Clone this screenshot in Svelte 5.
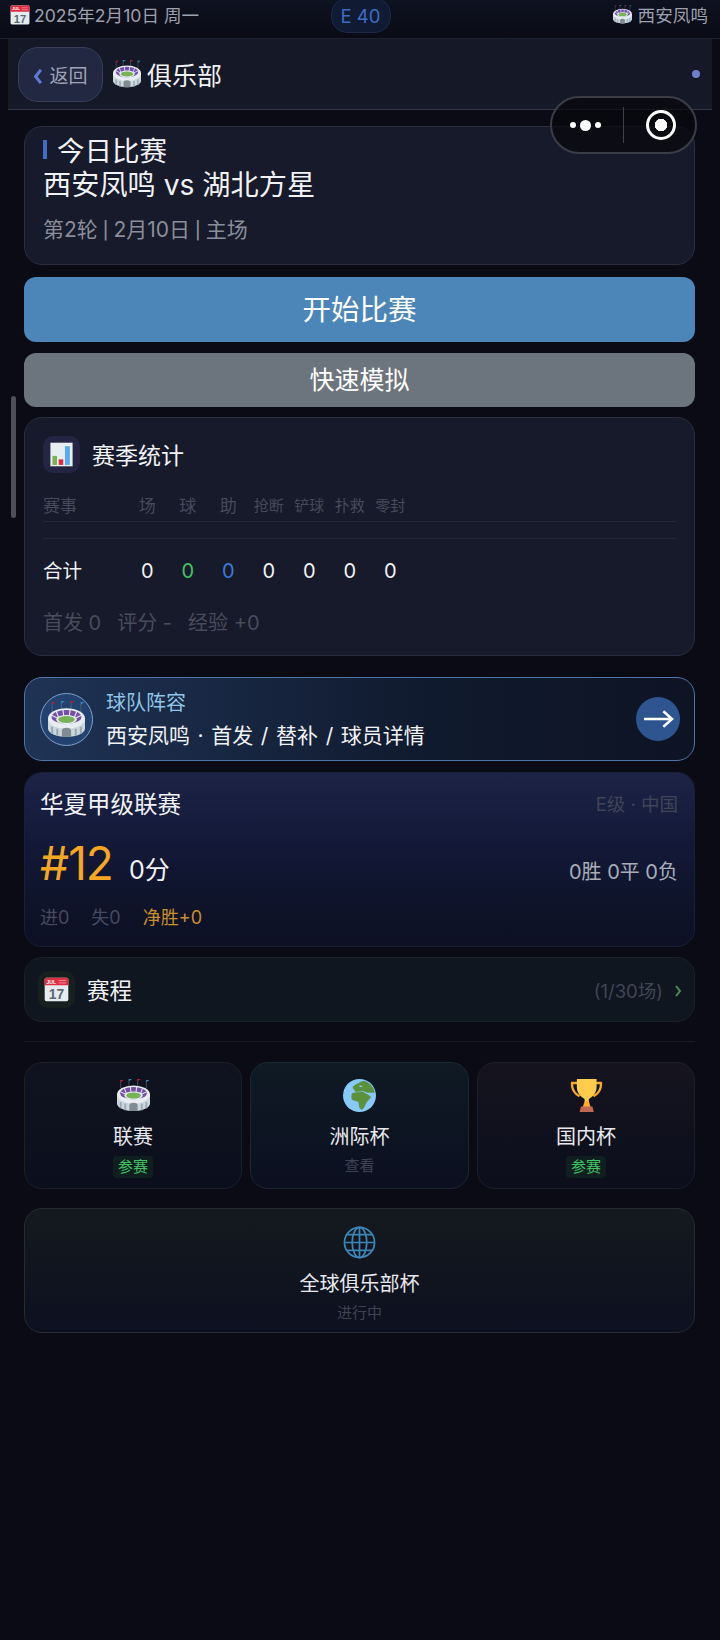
<script>
  const totals = [
    { v: 0 },
    { v: 0, c: 'green' },
    { v: 0, c: 'blue' },
    { v: 0 },
    { v: 0 },
    { v: 0 },
    { v: 0 }
  ];
  const heads = ['场', '球', '助', '抢断', '铲球', '扑救', '零封'];
</script>

{#snippet stadium()}
  <svg class="emoji" viewBox="0 0 36 36">
    <path d="M4 10V1M13 8V0M22.500 8V0M32 10V1" stroke="#66757f" stroke-width=".6" />
    <path d="M4 1h3.500L4 3.500z" fill="#be1931" />
    <path d="M13 0h3.500L13 2.500z" fill="#3b88c3" />
    <path d="M22.500 0H26l-3.500 2.500z" fill="#be1931" />
    <path d="M32 1h3.500L32 3.500z" fill="#3b88c3" />
    <path d="M0 17v10c0 4 8 8 18 8s18-4 18-8V17z" fill="#ccd6dd" />
    <ellipse cx="18" cy="17" rx="18" ry="10" fill="#e8edf1" />
    <ellipse cx="18" cy="15.500" rx="14.500" ry="6.800" fill="#744eaa" />
    <path d="M8 10l3 8M14.500 8.500l1.200 9M21.500 8.500l-1.200 9M28 10l-3 8M4 14l7 3.500M32 14l-7 3.500" stroke="#e8edf1" stroke-width="1.100" />
    <ellipse cx="18" cy="18" rx="10" ry="4.500" fill="#e8edf1" />
    <ellipse cx="18" cy="18" rx="8" ry="3.300" fill="#77b255" />
    <path d="M13.500 35v-6c0-2 1.500-3 4.500-3s4.500 1 4.500 3v6z" fill="#808b94" />
    <path d="M4 25v7M9 27v7M27 27v7M32 25v7" stroke="#99aab5" stroke-width="2" />
  </svg>
{/snippet}

{#snippet calendar()}
  <svg class="emoji" viewBox="0 0 36 36">
    <rect x="1" y="1" width="34" height="34" rx="2.500" fill="#e6ebef" />
    <path d="M1 12V3.500A2.500 2.500 0 0 1 3.500 1h29A2.500 2.500 0 0 1 35 3.500V12z" fill="#dd2e44" />
    <text x="3.500" y="9.500" class="jul">JUL</text>
    <path d="M21 5h11M21 8.500h11" stroke="#f4909f" stroke-width="1.300" />
    <text x="18" y="31.500" class="day">17</text>
  </svg>
{/snippet}

{#snippet chart()}
  <svg class="emoji" viewBox="0 0 36 36">
    <rect x="2" y="1" width="32" height="34" fill="#e8edf0" />
    <rect x="5" y="20" width="6.500" height="13" fill="#77b255" />
    <rect x="14" y="25" width="6.500" height="8" fill="#dd2e44" />
    <rect x="23" y="6" width="7" height="27" fill="#55acee" />
  </svg>
{/snippet}

{#snippet earth()}
  <svg class="emoji" viewBox="0 0 36 36">
    <circle cx="18" cy="18" r="18" fill="#88c9f9" />
    <g fill="#5c913b" stroke="#5c913b" stroke-width="1" stroke-linejoin="round">
      <path d="M9.500 16.500C11 15 13 15.500 15 15c2-1 5-1 7.500-.5 1 1.500 3 2 4 2.500 1 1 3 1.500 3.500 3-1 2-4 4-5.500 7-1 2-2 5-3.500 6-1.500.5-2.500-1-3-3-.5-2.500 0-4-1.500-5.500-2-1-5-1-6.500-2.500-.5-1.500-.5-3.500 0-5z" />
      <path d="M11 8.500c2-1.500 4-3 6-3.500 2-1.500 4-2.500 6-2.500 4 1 7.500 4 9.500 7.500 1 1.500 1.500 3 1.500 4.500-3-.5-6 .5-9-.5-1-1-3-1.500-5-1.500-2.500 0-4.500 1.500-6 1-1.500-1.500-3-3.500-3-5z" />
    </g>
    <path d="M17.500 7.500c1.500-.5 3-.5 4 .5-1 1.200-3 1.200-4-.5z" fill="#88c9f9" />
  </svg>
{/snippet}

{#snippet trophy()}
  <svg class="emoji" viewBox="0 0 36 36">
    <path d="M1 3h9v2.600H3.600c-.4 5 2.600 9.400 7.400 11.900l-1.200 2.300C4 17 .2 11 1 3zM35 3h-9v2.600h6.400c.4 5-2.600 9.400-7.400 11.900l1.200 2.300C32 17 35.800 11 35 3z" fill="#f4a92f" />
    <path d="M7.500 0h21.500v9c0 6-4 10-8.500 13v2.500h-4.500V22C11.500 19 7.500 15 7.500 9z" fill="#ffcc4d" />
    <path d="M16 24h4.500l2 6.500h-8.500z" fill="#ffac33" />
    <path d="M12 30h12.500l1.500 6H10.500z" fill="#c1694f" />
  </svg>
{/snippet}

<div class="page">
  <header class="status">
    <div class="side">
      <span class="status-icon">{@render calendar()}</span>
      <span>2025年2月10日 周一</span>
    </div>
    <div class="level">E 40</div>
    <div class="side">
      <span class="status-icon wide">{@render stadium()}</span>
      <span>西安凤鸣</span>
    </div>
  </header>

  <nav class="nav">
    <button class="back">
      <svg class="chev" viewBox="0 0 10 18"><path d="M8 2L2.500 9 8 16" /></svg>
      <span>返回</span>
    </button>
    <span class="nav-icon">{@render stadium()}</span>
    <span class="nav-title">俱乐部</span>
    <i class="nav-dot"></i>
  </nav>

  <div class="capsule">
    <div class="dots"><i></i><i class="big"></i><i></i></div>
    <div class="sep"></div>
    <div class="target"><i></i></div>
  </div>
  <div class="scrollbar"></div>

  <main class="content">
    <section class="card today">
      <div class="today-title">今日比赛</div>
      <div class="today-match">西安凤鸣 vs 湖北方星</div>
      <div class="today-sub">第2轮<span class="pipe">|</span>2月10日<span class="pipe">|</span>主场</div>
    </section>

    <button class="btn start">开始比赛</button>
    <button class="btn quick">快速模拟</button>

    <section class="card stats">
      <div class="stats-head">
        <span class="icon-box">{@render chart()}</span>
        <span class="stats-title">赛季统计</span>
      </div>
      <div class="row head-row">
        <span class="first">赛事</span>
        {#each heads as h}
          <span class="col">{h}</span>
        {/each}
      </div>
      <div class="spacer-row"></div>
      <div class="row total-row">
        <span class="first">合计</span>
        {#each totals as t}
          <span class="col {t.c ?? ''}">{t.v}</span>
        {/each}
      </div>
      <div class="stats-foot">
        <span>首发 0</span>
        <span>评分 -</span>
        <span>经验 +0</span>
      </div>
    </section>

    <section class="team">
      <div class="avatar">{@render stadium()}</div>
      <div class="team-text">
        <div class="team-label">球队阵容</div>
        <div class="team-line">西安凤鸣 · 首发 / 替补 / 球员详情</div>
      </div>
      <div class="go">
        <svg viewBox="0 0 32 20"><path d="M1 10h29M21 2l9 8-9 8" /></svg>
      </div>
    </section>

    <section class="league">
      <div class="league-top">
        <span class="league-name">华夏甲级联赛</span>
        <span class="league-tier">E级 · 中国</span>
      </div>
      <div class="league-mid">
        <span class="rank">#12</span>
        <span class="points">0分</span>
        <span class="record">0胜 0平 0负</span>
      </div>
      <div class="league-foot">
        <span>进0</span>
        <span>失0</span>
        <span class="net">净胜+0</span>
      </div>
    </section>

    <section class="schedule">
      <span class="icon-box green-box">{@render calendar()}</span>
      <span class="schedule-title">赛程</span>
      <span class="schedule-count">(1/30场)</span>
      <svg class="schedule-chev" viewBox="0 0 8 14"><path d="M2 2l4 5-4 5" /></svg>
    </section>

    <div class="divider"></div>

    <div class="cups">
      <section class="cup">
        <span class="cup-icon">{@render stadium()}</span>
        <span class="cup-name">联赛</span>
        <span class="badge">参赛</span>
      </section>
      <section class="cup teal">
        <span class="cup-icon">{@render earth()}</span>
        <span class="cup-name">洲际杯</span>
        <span class="cup-note">查看</span>
      </section>
      <section class="cup plum">
        <span class="cup-icon">{@render trophy()}</span>
        <span class="cup-name">国内杯</span>
        <span class="badge">参赛</span>
      </section>
    </div>

    <section class="world">
      <svg class="web" viewBox="0 0 34 34">
        <circle cx="17" cy="17" r="15.500" />
        <ellipse cx="17" cy="17" rx="7.500" ry="15.500" />
        <path d="M17 1.500v31M1.500 17h31M4 9h26M4 25h26" />
      </svg>
      <span class="cup-name">全球俱乐部杯</span>
      <span class="cup-note">进行中</span>
    </section>
  </main>
</div>

<style>
  :global(body) {
    margin: 0;
    background: #0a0b15;
  }

  .page {
    position: relative;
    width: 720px;
    min-height: 1640px;
    background: #0a0b15;
    color: #fff;
    font-family: "Inter", "Noto Sans CJK SC", sans-serif;
    overflow: hidden;
  }

  .emoji {
    display: block;
    width: 100%;
    height: 100%;
  }

  .jul {
    font: 700 7.500px "Liberation Sans", sans-serif;
    fill: #fff;
  }

  .day {
    font: 700 20px "Liberation Sans", sans-serif;
    fill: #5b6871;
    text-anchor: middle;
  }

  /* status bar */
  .status {
    display: flex;
    align-items: center;
    justify-content: space-between;
    box-sizing: border-box;
    height: 39px;
    padding: 0 12px 9px;
    background: linear-gradient(#0e1120, #0a0b15);
    border-bottom: 1px solid #1d2130;
    font-size: 17.600px;
    color: #9ca1ad;
  }

  .side {
    display: flex;
    align-items: center;
    gap: 4px;
    width: 260px;
  }

  .side:first-child {
    margin-left: -2px;
  }

  .side:last-child {
    justify-content: flex-end;
    gap: 6px;
  }

  .status-icon {
    width: 20px;
    height: 20px;
  }

  .status-icon.wide {
    width: 19px;
    height: 19px;
  }

  .level {
    box-sizing: border-box;
    width: 60px;
    height: 35px;
    margin: 1px 0 0 3px;
    line-height: 34px;
    text-align: center;
    font-size: 18.500px;
    color: #3f6cc4;
    background: #101a33;
    border: 1px solid #1c2947;
    border-radius: 16px;
  }

  /* nav */
  .nav {
    display: flex;
    align-items: center;
    box-sizing: border-box;
    height: 71px;
    margin: 0 8px;
    padding: 0 12px 0 10px;
    background: #151827;
    border-bottom: 1px solid #33384a;
  }

  .back {
    display: flex;
    align-items: center;
    justify-content: center;
    gap: 6px;
    box-sizing: border-box;
    width: 85px;
    height: 55px;
    padding: 0;
    background: #232842;
    border: 1px solid #383e5c;
    border-radius: 20px;
    font: inherit;
    font-size: 19px;
    color: #9ea3b6;
  }

  .chev {
    width: 10px;
    height: 17px;
    margin-top: 4px;
    fill: none;
    stroke: #5f7ad8;
    stroke-width: 3.200;
  }

  .nav-icon {
    width: 28px;
    height: 28px;
    margin-left: 10px;
  }

  .nav-title {
    margin-left: 6px;
    font-size: 25px;
    color: #f1f2f5;
  }

  .nav-dot {
    width: 8px;
    height: 8px;
    margin-left: auto;
    border-radius: 50%;
    background: #6f7fc7;
  }

  /* wechat capsule lying over the page */
  .capsule {
    position: absolute;
    top: 96px;
    left: 550px;
    display: flex;
    align-items: center;
    box-sizing: border-box;
    width: 147px;
    height: 58px;
    background: rgba(8, 8, 12, .72);
    border: 2px solid #3b3d46;
    border-radius: 29px;
  }

  .dots {
    display: flex;
    align-items: center;
    justify-content: center;
    gap: 4px;
    box-sizing: border-box;
    width: 71px;
    padding-right: 4px;
  }

  .dots i {
    width: 6px;
    height: 6px;
    border-radius: 50%;
    background: #fff;
  }

  .dots i.big {
    width: 11px;
    height: 11px;
  }

  .sep {
    width: 1px;
    height: 36px;
    background: #3f414a;
  }

  .target {
    display: flex;
    align-items: center;
    justify-content: center;
    flex: 1;
    padding-left: 2px;
  }

  .target i {
    box-sizing: border-box;
    width: 30px;
    height: 30px;
    border: 3px solid #fff;
    border-radius: 50%;
    background: radial-gradient(circle, #fff 0 6px, transparent 6.500px);
  }

  .scrollbar {
    position: absolute;
    top: 396px;
    left: 11px;
    width: 5px;
    height: 122px;
    border-radius: 3px;
    background: #4d505a;
  }

  /* content */
  .content {
    display: flex;
    flex-direction: column;
    padding: 16px 25px 0 24px;
  }

  .card {
    box-sizing: border-box;
    background: #161a2a;
    border: 1px solid #2a2e40;
    border-radius: 18px;
  }

  .today {
    height: 139px;
    padding: 5px 18px 0;
  }

  .today-title {
    display: flex;
    align-items: center;
    height: 34px;
    font-size: 27.500px;
    color: #f1f2f5;
  }

  .today-title::before {
    content: "";
    width: 4px;
    height: 19px;
    margin-right: 10px;
    background: #3f6cc4;
  }

  .today-match {
    height: 38px;
    line-height: 38px;
    font-size: 28.200px;
    color: #f1f2f5;
  }

  .today-sub {
    margin-top: 11px;
    font-size: 21px;
    line-height: 30px;
    color: #8a8e9b;
  }

  .pipe {
    margin: 0 5px;
    font-family: "Roboto", sans-serif;
    font-size: 23px;
    line-height: 20px;
  }

  .btn {
    display: block;
    width: 100%;
    border: 0;
    border-radius: 12px;
    font: inherit;
    color: #fff;
  }

  .start {
    height: 65px;
    margin-top: 12px;
    padding: 0 0 5px;
    font-size: 28.500px;
    background: #4c86b8;
  }

  .quick {
    height: 54px;
    margin-top: 11px;
    padding: 0 0 4px;
    font-size: 25px;
    background: #6c757d;
  }

  .stats {
    height: 239px;
    margin-top: 10px;
    padding: 18px 18px 0;
  }

  .stats-head {
    display: flex;
    align-items: center;
    gap: 12px;
  }

  .icon-box {
    display: block;
    box-sizing: border-box;
    width: 37px;
    height: 37px;
    padding: 6px;
    background: #232542;
    border-radius: 10px;
  }

  .stats-title {
    padding-bottom: 2px;
    font-size: 23px;
    color: #f1f2f5;
  }

  .row {
    display: grid;
    grid-template-columns: 84px repeat(7, 40.500px);
    align-items: center;
    text-align: center;
  }

  .first {
    text-align: left;
  }

  .head-row {
    height: 28px;
    margin-top: 17px;
    padding-bottom: 3px;
    border-bottom: 1px solid #232738;
    font-size: 15px;
    color: #454a5a;
  }

  .head-row .first {
    font-size: 17px;
  }

  .head-row .col:nth-child(-n+4) {
    font-size: 17px;
  }

  .spacer-row {
    height: 16px;
    border-bottom: 1px solid #232738;
  }

  .total-row {
    height: 63px;
    font-size: 20px;
    color: #f1f2f5;
  }

  .total-row .first {
    padding-bottom: 2px;
    font-size: 19.500px;
  }

  .green {
    color: #3fc463;
  }

  .blue {
    color: #3f78d8;
  }

  .stats-foot {
    display: flex;
    gap: 16px;
    margin-top: 5px;
    font-size: 20px;
    color: #474c5c;
  }

  .team {
    display: flex;
    align-items: center;
    box-sizing: border-box;
    height: 84px;
    margin-top: 21px;
    padding: 0 14px 0 15px;
    background: linear-gradient(90deg, #1f3355, #101a2e 60%, #0e1424);
    border: 1.500px solid #4f74a8;
    border-radius: 18px;
  }

  .avatar {
    box-sizing: border-box;
    width: 53px;
    height: 53px;
    padding: 7px;
    background: #24426f;
    border: 1.500px solid #7fa0cc;
    border-radius: 50%;
  }

  .team-text {
    flex: 1;
    margin-left: 13px;
  }

  .team-label {
    font-size: 20px;
    line-height: 30px;
    color: #8fc4e6;
  }

  .team-line {
    margin-top: 3px;
    font-size: 21px;
    line-height: 30px;
    word-spacing: 1.700px;
    color: #f1f2f5;
  }

  .go {
    display: flex;
    align-items: center;
    justify-content: center;
    width: 44px;
    height: 44px;
    background: #2f5590;
    border-radius: 50%;
  }

  .go svg {
    width: 31px;
    height: 20px;
    fill: none;
    stroke: #fff;
    stroke-width: 2.500;
  }

  .league {
    box-sizing: border-box;
    height: 175px;
    margin-top: 11px;
    padding: 14px 16px 0 15px;
    background: linear-gradient(#1c2346, #121836 45%, #0c1022);
    border: 1px solid #1b2038;
    border-radius: 18px;
  }

  .league-top,
  .league-mid {
    display: flex;
    align-items: center;
  }

  .league-top {
    justify-content: space-between;
    height: 32px;
  }

  .league-name {
    font-size: 23.500px;
    color: #f1f2f5;
  }

  .league-tier {
    font-size: 18.500px;
    color: #3f4557;
  }

  .league-mid {
    height: 54px;
    margin-top: 17px;
  }

  .rank {
    font-size: 46px;
    color: #f5a623;
    letter-spacing: -1px;
  }

  .points {
    margin: 10px 0 0 16px;
    font-size: 25px;
    color: #f1f2f5;
  }

  .record {
    margin: 14px 0 0 auto;
    font-size: 20px;
    color: #a9adb8;
  }

  .league-foot {
    display: flex;
    gap: 22px;
    margin-top: 14px;
    font-size: 18px;
    line-height: 28px;
    color: #454a5c;
  }

  .net {
    color: #c98f2a;
  }

  .schedule {
    display: flex;
    align-items: center;
    box-sizing: border-box;
    height: 65px;
    margin-top: 10px;
    padding: 0 12px 0 13px;
    background: #10161f;
    border: 1px solid #1a2229;
    border-radius: 18px;
  }

  .green-box {
    background: #16211f;
  }

  .schedule-title {
    margin-left: 12px;
    padding-bottom: 2px;
    font-size: 22.500px;
    color: #f1f2f5;
  }

  .schedule-count {
    margin-left: auto;
    font-size: 18.500px;
    color: #3f4557;
  }

  .schedule-chev {
    width: 8px;
    height: 14px;
    margin: 3px 0 0 11px;
    fill: none;
    stroke: #4f8a5c;
    stroke-width: 2;
  }

  .divider {
    height: 1px;
    margin-top: 19px;
    background: #171a26;
  }

  .cups {
    display: grid;
    grid-template-columns: 218px 219px 218px;
    gap: 8px;
    margin-top: 20px;
  }

  .cup,
  .world {
    display: flex;
    flex-direction: column;
    align-items: center;
    box-sizing: border-box;
    border: 1px solid #1c2029;
    border-radius: 18px;
    background: linear-gradient(#10131f, #0b0e1c);
  }

  .cup {
    height: 127px;
    padding-top: 16px;
  }

  .teal {
    background: linear-gradient(#0f1a24, #0b0f20);
    border-color: #1d2732;
  }

  .plum {
    background: linear-gradient(#15141f, #0c0e1c);
  }

  .cup-icon {
    width: 33px;
    height: 33px;
  }

  .cup-name {
    margin-top: 11px;
    font-size: 20px;
    line-height: 28px;
    color: #e8e9ee;
  }

  .badge {
    margin-top: 5px;
    padding: 0 5px;
    height: 22px;
    line-height: 21px;
    font-size: 15px;
    color: #3fc463;
    background: #0f1f20;
    border-radius: 4px;
  }

  .cup-note {
    margin-top: 4px;
    font-size: 15px;
    line-height: 22px;
    color: #3f4454;
  }

  .world {
    height: 125px;
    margin-top: 19px;
    padding-top: 17px;
    background: linear-gradient(#141a1e, #0c1020);
    border-color: #252b30;
  }

  .web {
    width: 33px;
    height: 33px;
    fill: none;
    stroke: #3d85b8;
    stroke-width: 1.800;
  }
</style>
